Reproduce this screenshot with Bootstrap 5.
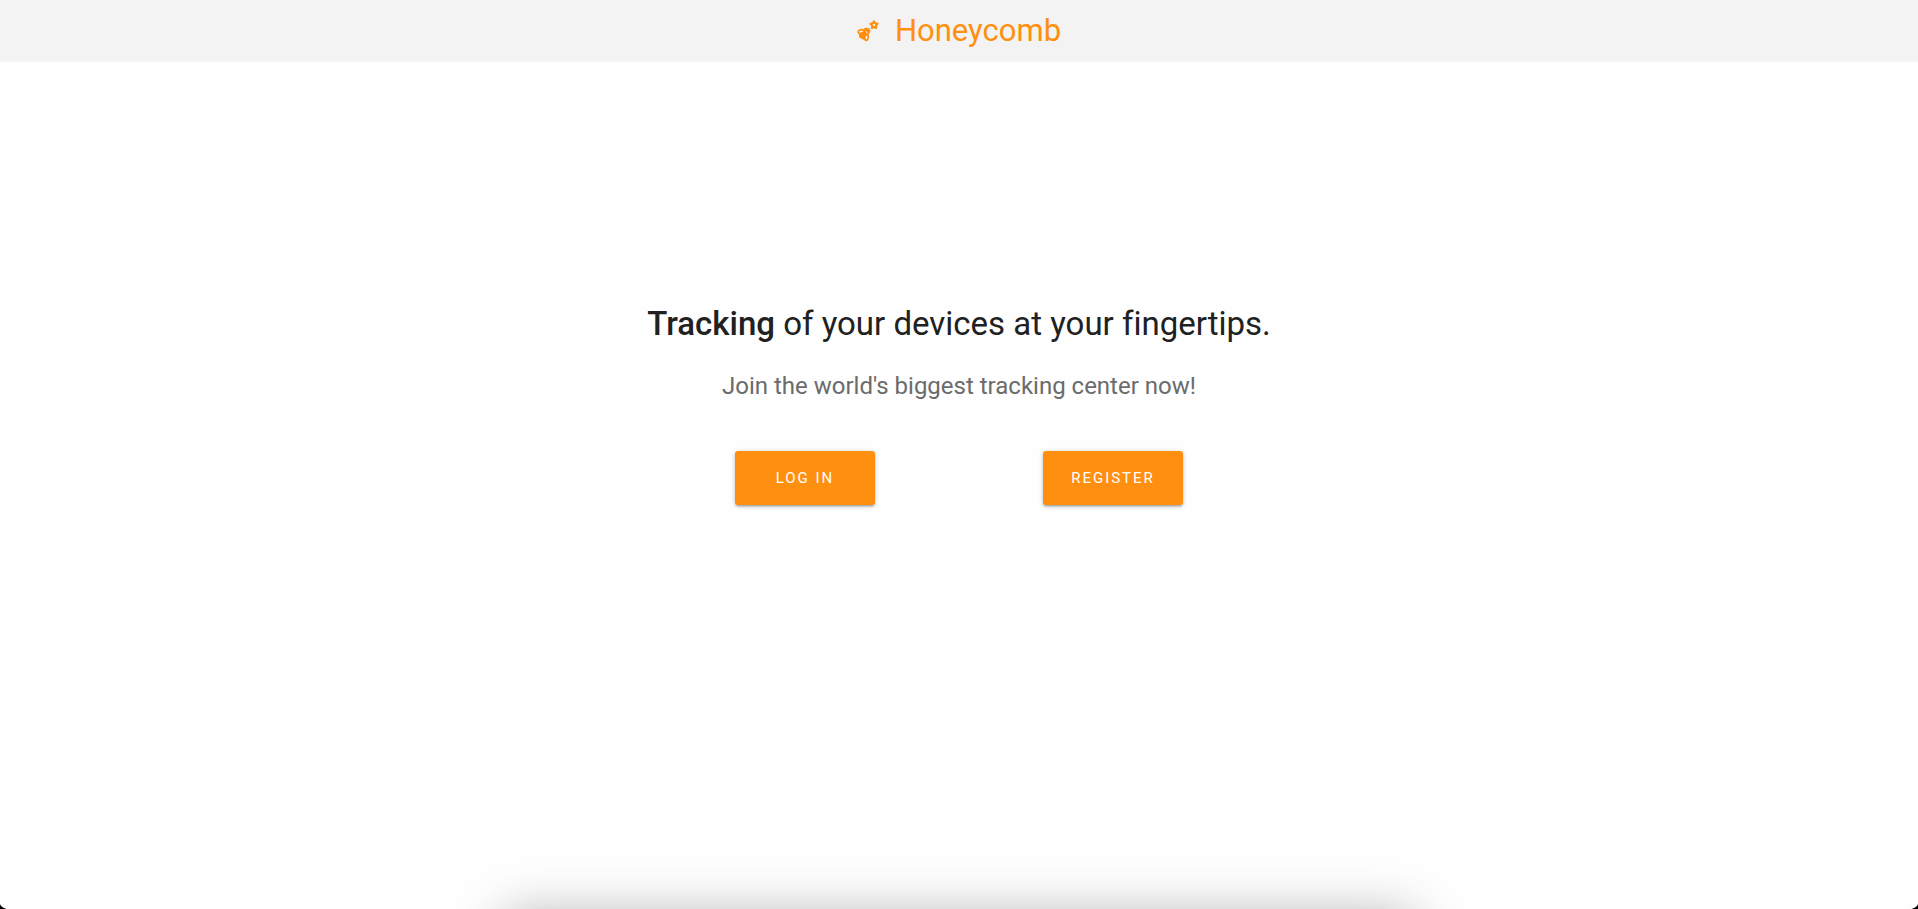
<!DOCTYPE html>
<html lang="en">
<head>
<meta charset="utf-8">
<meta name="viewport" content="width=device-width, initial-scale=1">
<title>Honeycomb</title>
<link href="https://cdn.jsdelivr.net/npm/bootstrap@5.3.0/dist/css/bootstrap.min.css" rel="stylesheet">
<style>
  :root { --honey: #ff8f0f; }
  body { font-family: Roboto, "Liberation Sans", sans-serif; font-variant-ligatures: none; color: #212121; background: #fefefe; }
  .topbar { background: #f3f3f3; height: 62px; }
  .brand { color: var(--honey); font-size: 31px; line-height: 40px; gap: 16px; }
  .brand:hover { color: var(--honey); }
  .hero { max-width: 720px; margin-top: 240px; }
  .hero-title { font-size: 33px; line-height: 44px; font-weight: 400; margin-bottom: 24px; }
  .hero-title strong { font-weight: 500; }
  .hero-lead { font-size: 24px; line-height: 32px; color: #6b6b6b; margin-bottom: 49px; }
  .hero-actions { max-width: 616px; }
  .btn-honey {
    --bs-btn-color: #fff; --bs-btn-bg: var(--honey);
    --bs-btn-hover-color: #fff; --bs-btn-hover-bg: #ff9d2e;
    --bs-btn-active-color: #fff; --bs-btn-active-bg: #f08000;
    --bs-btn-border-radius: 3px; --bs-btn-border-width: 0;
    --bs-btn-font-size: 15px;
    width: 140px; height: 54px; letter-spacing: 2px;
    box-shadow: 0 2px 2px rgba(0,0,0,.14), 0 3px 1px -2px rgba(0,0,0,.12), 0 1px 5px rgba(0,0,0,.2);
  }
  .dock-shade {
    left: 26%; right: 26%; bottom: -84px; height: 80px; border-radius: 24px;
    box-shadow: 0 0 50px rgba(0,0,0,.28);
  }
  .corner { width: 10px; height: 7px; bottom: 0; }
  .corner-start { left: 0; background: radial-gradient(ellipse at 100% 0, transparent 70%, #000 78%); }
  .corner-end { right: 0; background: radial-gradient(ellipse at 0 0, transparent 70%, #000 78%); }
</style>
</head>
<body>
<div class="position-relative overflow-hidden min-vh-100">
  <nav class="topbar d-flex justify-content-center align-items-center">
    <a class="brand d-flex align-items-center text-decoration-none" href="#">
      <svg width="22" height="22" viewBox="0 0 22 22" fill="none" stroke="#ff8f0f" stroke-width="1.7" stroke-linejoin="round" stroke-linecap="round" aria-hidden="true">
        <path d="M2.500 12.500 6 11l5 3-1 4.500-3 .5-4-2z" fill="#ff8f0f"/>
        <ellipse cx="4" cy="11.500" rx="2.900" ry="1.700" transform="rotate(-15 4 11.500)" fill="#f3f3f3"/>
        <ellipse cx="9.500" cy="17.500" rx="1.700" ry="2.900" transform="rotate(15 9.500 17.500)" fill="#f3f3f3"/>
        <path d="M7 11c0-2.500 2.500-3.200 4-1.500 2 1 1.600 4-1 4.500z" fill="#ff8f0f"/>
        <path d="M9 11.500l1.300 1.500" stroke="#f3f3f3" stroke-width="1"/>
        <path d="M11 9.500l1.400-.8M12 11l1.200-.4" stroke-width="1.300"/>
        <path d="M17 1.300l1.100 1.900 2.500.5-1.700 1.800.3 2.500-2.200-1-2.200 1 .3-2.500-1.700-1.800 2.500-.5z" stroke-width="2"/>
      </svg>
      <span>Honeycomb</span>
    </a>
  </nav>

  <main class="hero container text-center">
    <h1 class="hero-title"><strong>Tracking</strong> of your devices at your fingertips.</h1>
    <p class="hero-lead">Join the world's biggest tracking center now!</p>
    <div class="hero-actions row g-0 mx-auto">
      <div class="col-6"><button type="button" class="btn btn-honey">LOG IN</button></div>
      <div class="col-6"><button type="button" class="btn btn-honey">REGISTER</button></div>
    </div>
  </main>

  <div class="dock-shade position-absolute"></div>
  <div class="corner corner-start position-absolute"></div>
  <div class="corner corner-end position-absolute"></div>
</div>
<script src="https://cdn.jsdelivr.net/npm/bootstrap@5.3.0/dist/js/bootstrap.bundle.min.js"></script>
</body>
</html>
